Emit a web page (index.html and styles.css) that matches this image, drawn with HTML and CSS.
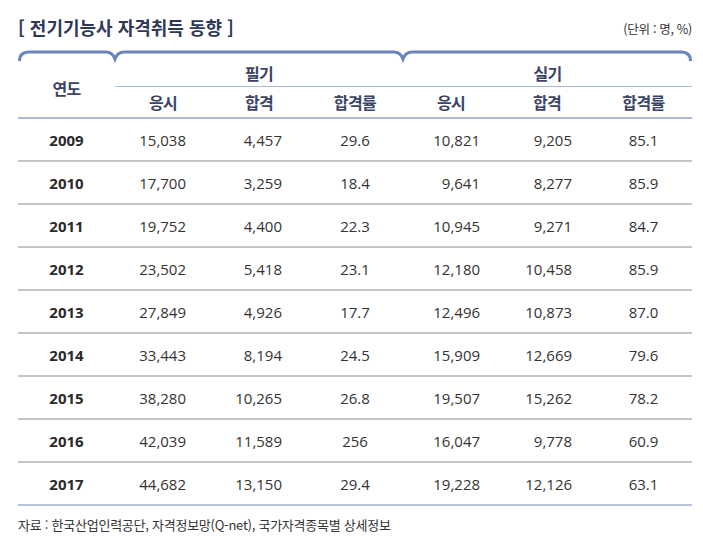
FILE: index.html
```html
<!DOCTYPE html>
<html lang="ko">
<head>
<meta charset="utf-8">
<title>전기기능사 자격취득 동향</title>
<link rel="stylesheet" href="styles.css">
</head>
<body>
<div class="wrap">
  <div class="top">
    <h1 class="title">[ 전기기능사 자격취득 동향 ]</h1>
    <span class="unit">(단위 : 명, %)</span>
  </div>
  <svg class="brace" width="674" height="10" viewBox="0 0 674 10">
    <path d="M1.5,12 Q1.5,3 11,3 L88,3 Q94.5,3 97,10 Q99.5,3 106,3 L376,3 Q382.5,3 385,10 Q387.5,3 394,3 L663,3 Q672.5,3 672.5,12" fill="none" stroke="#6a86bd" stroke-width="3"/>
  </svg>
  <table class="tbl">
    <colgroup>
      <col class="c-year"><col class="c"><col class="c"><col class="c"><col class="c"><col class="c"><col class="c-last">
    </colgroup>
    <thead>
      <tr class="h1">
        <th rowspan="2" class="hy">연도</th>
        <th colspan="3" class="hg">필기</th>
        <th colspan="3" class="hg">실기</th>
      </tr>
      <tr class="h2">
        <th>응시</th><th>합격</th><th>합격률</th>
        <th>응시</th><th>합격</th><th>합격률</th>
      </tr>
    </thead>
    <tbody>
      <tr><td class="y">2009</td><td class="n1">15,038</td><td class="n1">4,457</td><td class="p">29.6</td><td class="n2">10,821</td><td class="n3">9,205</td><td class="p">85.1</td></tr>
      <tr><td class="y">2010</td><td class="n1">17,700</td><td class="n1">3,259</td><td class="p">18.4</td><td class="n2">9,641</td><td class="n3">8,277</td><td class="p">85.9</td></tr>
      <tr><td class="y">2011</td><td class="n1">19,752</td><td class="n1">4,400</td><td class="p">22.3</td><td class="n2">10,945</td><td class="n3">9,271</td><td class="p">84.7</td></tr>
      <tr><td class="y">2012</td><td class="n1">23,502</td><td class="n1">5,418</td><td class="p">23.1</td><td class="n2">12,180</td><td class="n3">10,458</td><td class="p">85.9</td></tr>
      <tr><td class="y">2013</td><td class="n1">27,849</td><td class="n1">4,926</td><td class="p">17.7</td><td class="n2">12,496</td><td class="n3">10,873</td><td class="p">87.0</td></tr>
      <tr><td class="y">2014</td><td class="n1">33,443</td><td class="n1">8,194</td><td class="p">24.5</td><td class="n2">15,909</td><td class="n3">12,669</td><td class="p">79.6</td></tr>
      <tr><td class="y">2015</td><td class="n1">38,280</td><td class="n1">10,265</td><td class="p">26.8</td><td class="n2">19,507</td><td class="n3">15,262</td><td class="p">78.2</td></tr>
      <tr><td class="y">2016</td><td class="n1">42,039</td><td class="n1">11,589</td><td class="p">256</td><td class="n2">16,047</td><td class="n3">9,778</td><td class="p">60.9</td></tr>
      <tr class="last"><td class="y">2017</td><td class="n1">44,682</td><td class="n1">13,150</td><td class="p">29.4</td><td class="n2">19,228</td><td class="n3">12,126</td><td class="p">63.1</td></tr>
    </tbody>
  </table>
  <p class="src">자료 : 한국산업인력공단, 자격정보망(Q-net), 국가자격종목별 상세정보</p>
</div>
</body>
</html>
```

FILE: styles.css
```css
html, body {
  margin: 0;
  padding: 0;
  background: #ffffff;
}
body {
  font-family: "Open Sans", "Noto Sans CJK KR", sans-serif;
  color: #333333;
}
.wrap {
  width: 674px;
  padding: 14px 0 0 18px;
}
.top {
  display: flex;
  justify-content: space-between;
  align-items: center;
  height: 26px;
  margin-bottom: 9px;
}
.title {
  margin: 0;
  font-family: "Noto Sans CJK KR", sans-serif;
  font-size: 18px;
  font-weight: 700;
  letter-spacing: 0;
  color: #2e3858;
  line-height: 26px;
}
.unit {
  font-family: "Noto Sans CJK KR", sans-serif;
  font-size: 12.5px;
  letter-spacing: -0.3px;
  color: #333;
  padding-top: 2px;
}
.brace {
  display: block;
  overflow: visible;
}
.tbl {
  width: 674px;
  border-collapse: collapse;
  table-layout: fixed;
}
.c-year { width: 97px; }
.c { width: 96px; }
.c-last { width: 97px; }
th {
  font-family: "Noto Sans CJK KR", sans-serif;
  font-weight: 700;
  font-size: 16px;
  letter-spacing: -0.6px;
  color: #3a4466;
  padding: 0;
  text-align: center;
}
.h1 th { height: 27px; }
.hg { border-bottom: 1.5px solid #a9b9d9; }
.h2 th {
  height: 30px;
  border-bottom: 2px solid #a9b9d9;
}
.hy { border-bottom: 2px solid #a9b9d9; }
td {
  height: 41px;
  padding: 0;
  font-size: 15px;
  color: #333;
  border-bottom: 2px solid #c6c6c6;
}
tr.last td { border-bottom: 2px solid #b4c2de; }
.y { text-align: center; font-weight: 700; color: #2a2a2a; }
.n1 { text-align: right; padding-right: 25px; }
.n2 { text-align: right; padding-right: 19px; }
.n3 { text-align: right; padding-right: 23px; }
.p { text-align: center; }
.src {
  margin: 9px 0 0;
  font-family: "Noto Sans CJK KR", sans-serif;
  font-size: 13px;
  letter-spacing: -0.25px;
  line-height: 20px;
  color: #333;
}
```
